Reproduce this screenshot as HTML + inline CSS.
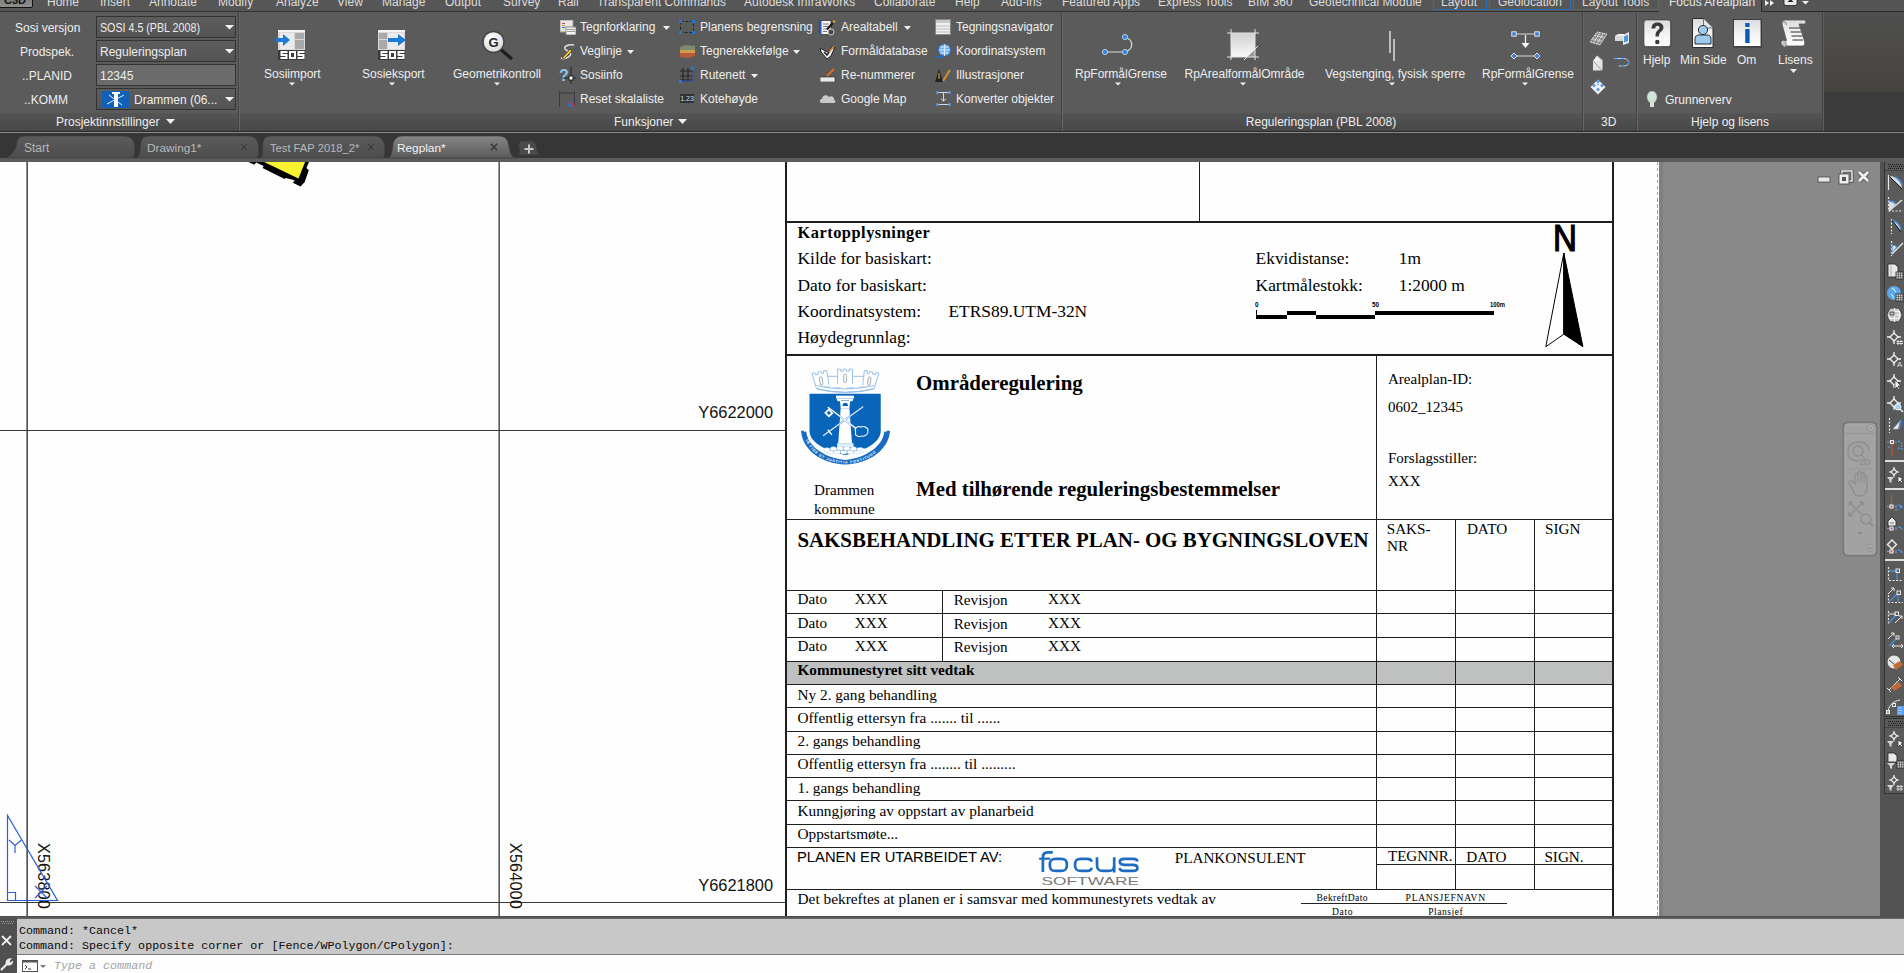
<!DOCTYPE html><html><head><meta charset="utf-8"><style>
html,body{margin:0;padding:0;}
body{width:1904px;height:973px;position:relative;overflow:hidden;background:#5b5b5b;}
.t{position:absolute;white-space:pre;line-height:1;}
.r{position:absolute;}
</style></head><body>
<div class="r" style="left:0px;top:0px;width:1904px;height:11px;background:#565656;"></div>
<div class="r" style="left:0px;top:11px;width:1904px;height:1px;background:#333333;"></div>
<div class="r" style="left:-2px;top:-4px;width:35px;height:12px;background:linear-gradient(#7a7a7a,#8e8e8e);border:1.5px solid #111;border-radius:0 0 2px 0;box-sizing:border-box;"></div>
<div class="t" style="left:4.00px;top:-4.81px;font-size:11px;font-family:'Liberation Sans', sans-serif;color:#111;font-weight:bold;">C3D</div>
<div class="t" style="left:47.00px;top:-4.16px;font-size:12px;font-family:'Liberation Sans', sans-serif;color:#dcdcdc;">Home</div>
<div class="t" style="left:100.00px;top:-4.16px;font-size:12px;font-family:'Liberation Sans', sans-serif;color:#dcdcdc;">Insert</div>
<div class="t" style="left:149.00px;top:-4.16px;font-size:12px;font-family:'Liberation Sans', sans-serif;color:#dcdcdc;">Annotate</div>
<div class="t" style="left:218.00px;top:-4.16px;font-size:12px;font-family:'Liberation Sans', sans-serif;color:#dcdcdc;">Modify</div>
<div class="t" style="left:276.00px;top:-4.16px;font-size:12px;font-family:'Liberation Sans', sans-serif;color:#dcdcdc;">Analyze</div>
<div class="t" style="left:337.00px;top:-4.16px;font-size:12px;font-family:'Liberation Sans', sans-serif;color:#dcdcdc;">View</div>
<div class="t" style="left:382.00px;top:-4.16px;font-size:12px;font-family:'Liberation Sans', sans-serif;color:#dcdcdc;">Manage</div>
<div class="t" style="left:445.00px;top:-4.16px;font-size:12px;font-family:'Liberation Sans', sans-serif;color:#dcdcdc;">Output</div>
<div class="t" style="left:503.00px;top:-4.16px;font-size:12px;font-family:'Liberation Sans', sans-serif;color:#dcdcdc;">Survey</div>
<div class="t" style="left:558.00px;top:-4.16px;font-size:12px;font-family:'Liberation Sans', sans-serif;color:#dcdcdc;">Rail</div>
<div class="t" style="left:597.00px;top:-4.16px;font-size:12px;font-family:'Liberation Sans', sans-serif;color:#dcdcdc;">Transparent Commands</div>
<div class="t" style="left:744.00px;top:-4.16px;font-size:12px;font-family:'Liberation Sans', sans-serif;color:#dcdcdc;">Autodesk InfraWorks</div>
<div class="t" style="left:874.00px;top:-4.16px;font-size:12px;font-family:'Liberation Sans', sans-serif;color:#dcdcdc;">Collaborate</div>
<div class="t" style="left:955.00px;top:-4.16px;font-size:12px;font-family:'Liberation Sans', sans-serif;color:#dcdcdc;">Help</div>
<div class="t" style="left:1001.00px;top:-4.16px;font-size:12px;font-family:'Liberation Sans', sans-serif;color:#dcdcdc;">Add-ins</div>
<div class="t" style="left:1062.00px;top:-4.16px;font-size:12px;font-family:'Liberation Sans', sans-serif;color:#dcdcdc;">Featured Apps</div>
<div class="t" style="left:1158.00px;top:-4.16px;font-size:12px;font-family:'Liberation Sans', sans-serif;color:#dcdcdc;">Express Tools</div>
<div class="t" style="left:1248.00px;top:-4.16px;font-size:12px;font-family:'Liberation Sans', sans-serif;color:#dcdcdc;">BIM 360</div>
<div class="t" style="left:1309.00px;top:-4.16px;font-size:12px;font-family:'Liberation Sans', sans-serif;color:#dcdcdc;">Geotechnical Module</div>
<div class="r" style="left:1433px;top:-2px;width:54px;height:12px;background:transparent;border:1px solid #2d6db5;box-sizing:border-box;"></div>
<div class="t" style="left:1441.00px;top:-4.16px;font-size:12px;font-family:'Liberation Sans', sans-serif;color:#dcdcdc;">Layout</div>
<div class="r" style="left:1489px;top:-2px;width:82px;height:12px;background:transparent;border:1px solid #2d6db5;box-sizing:border-box;"></div>
<div class="t" style="left:1498.00px;top:-4.16px;font-size:12px;font-family:'Liberation Sans', sans-serif;color:#dcdcdc;">Geolocation</div>
<div class="r" style="left:1573px;top:-2px;width:86px;height:12px;background:transparent;border:1px solid #5d6d5a;box-sizing:border-box;"></div>
<div class="t" style="left:1582.00px;top:-4.16px;font-size:12px;font-family:'Liberation Sans', sans-serif;color:#dcdcdc;">Layout Tools</div>
<div class="r" style="left:1659px;top:0px;width:102px;height:12px;background:#5b5b5b;"></div>
<div class="t" style="left:1669.00px;top:-4.16px;font-size:12px;font-family:'Liberation Sans', sans-serif;color:#e6e6e6;">Focus Arealplan</div>
<div class="r" style="left:1761px;top:0px;width:143px;height:11px;background:#555555;"></div>
<div class="r" style="left:1761px;top:0px;width:1px;height:12px;background:#2a2a2a;"></div>
<div class="r" style="left:1761px;top:11px;width:143px;height:1px;background:#2a2a2a;"></div>
<svg class="r" style="left:1765px;top:0px;" width="12" height="7" viewBox="0 0 12 7"><path d="M0 0L4 3L0 6Z M5 0L9 3L5 6Z" fill="#f0f0f0"/></svg>
<svg class="r" style="left:1783px;top:-3px;" width="16" height="9" viewBox="0 0 16 9"><rect x="1" y="0.5" width="13" height="8" rx="2" fill="#e8e8e8" stroke="#222" stroke-width="0.8"/><path d="M4.5 5H10.5L7.5 2Z" fill="#222"/></svg>
<svg class="r" style="left:1802px;top:1px;" width="7" height="4" viewBox="0 0 7 4"><path d="M0 0H7L3.5 3.5Z" fill="#f0f0f0"/></svg>
<div class="r" style="left:0px;top:12px;width:1822px;height:119px;background:#5b5b5b;"></div>
<div class="r" style="left:1822px;top:12px;width:82px;height:80px;background:linear-gradient(#4f4f4f,#46443f);"></div>
<div class="r" style="left:1822px;top:92px;width:82px;height:40px;background:#3b3b3b;"></div>
<div class="r" style="left:0px;top:113px;width:1822px;height:18px;background:linear-gradient(#555555,#474747);"></div>
<div class="r" style="left:1822px;top:12px;width:1px;height:119px;background:#444444;"></div>
<div class="r" style="left:1823px;top:12px;width:1px;height:119px;background:#5e5e5e;"></div>
<div class="r" style="left:0px;top:131px;width:1904px;height:1px;background:#2a2a2a;"></div>
<div class="r" style="left:0px;top:132px;width:1904px;height:1px;background:#8a8a8a;"></div>
<div class="r" style="left:238px;top:12px;width:1px;height:119px;background:#444444;"></div>
<div class="r" style="left:239px;top:12px;width:1px;height:119px;background:#656565;"></div>
<div class="r" style="left:1061px;top:12px;width:1px;height:119px;background:#444444;"></div>
<div class="r" style="left:1062px;top:12px;width:1px;height:119px;background:#656565;"></div>
<div class="r" style="left:1582px;top:12px;width:1px;height:119px;background:#444444;"></div>
<div class="r" style="left:1583px;top:12px;width:1px;height:119px;background:#656565;"></div>
<div class="r" style="left:1636px;top:12px;width:1px;height:119px;background:#444444;"></div>
<div class="r" style="left:1637px;top:12px;width:1px;height:119px;background:#656565;"></div>
<div class="t" style="left:15.00px;top:21.84px;font-size:12px;font-family:'Liberation Sans', sans-serif;color:#eeeeee;">Sosi versjon</div>
<div class="t" style="left:20.00px;top:45.84px;font-size:12px;font-family:'Liberation Sans', sans-serif;color:#eeeeee;">Prodspek.</div>
<div class="t" style="left:22.00px;top:69.84px;font-size:12px;font-family:'Liberation Sans', sans-serif;color:#eeeeee;">..PLANID</div>
<div class="t" style="left:24.00px;top:93.84px;font-size:12px;font-family:'Liberation Sans', sans-serif;color:#eeeeee;">..KOMM</div>
<div class="r" style="left:96px;top:16px;width:140px;height:22px;background:linear-gradient(#5d5d5d,#545454);border:1px solid #333;box-sizing:border-box;"></div>
<div class="t" style="left:100.00px;top:21.84px;font-size:12px;font-family:'Liberation Sans', sans-serif;color:#eeeeee;transform:scaleX(0.89);transform-origin:0 0;">SOSI 4.5 (PBL 2008)</div>
<svg class="r" style="left:225px;top:25px;" width="9" height="5" viewBox="0 0 9 5"><path d="M0 0H9L4.5 4.5Z" fill="#f0f0f0"/></svg>
<div class="r" style="left:96px;top:40px;width:140px;height:22px;background:linear-gradient(#5d5d5d,#545454);border:1px solid #333;box-sizing:border-box;"></div>
<div class="t" style="left:100.00px;top:45.84px;font-size:12px;font-family:'Liberation Sans', sans-serif;color:#eeeeee;">Reguleringsplan</div>
<svg class="r" style="left:225px;top:49px;" width="9" height="5" viewBox="0 0 9 5"><path d="M0 0H9L4.5 4.5Z" fill="#f0f0f0"/></svg>
<div class="r" style="left:96px;top:64px;width:140px;height:22px;background:#6b6b6b;border:1px solid #333;box-sizing:border-box;"></div>
<div class="t" style="left:100.00px;top:69.84px;font-size:12px;font-family:'Liberation Sans', sans-serif;color:#eeeeee;">12345</div>
<div class="r" style="left:96px;top:88px;width:140px;height:22px;background:linear-gradient(#5d5d5d,#545454);border:1px solid #333;box-sizing:border-box;"></div>
<div class="t" style="left:134.00px;top:93.84px;font-size:12px;font-family:'Liberation Sans', sans-serif;color:#eeeeee;">Drammen (06...</div>
<svg class="r" style="left:225px;top:97px;" width="9" height="5" viewBox="0 0 9 5"><path d="M0 0H9L4.5 4.5Z" fill="#f0f0f0"/></svg>
<div class="r" style="left:102px;top:91px;width:27px;height:17px;background:#1060b8;"></div>
<svg class="r" style="left:102px;top:91px;" width="27" height="17" viewBox="0 0 27 17"><rect x="12" y="2" width="4" height="14" fill="#fff"/><rect x="10" y="1" width="8" height="2" fill="#fff"/><path d="M5 13L22 4M7 4L20 14" stroke="#e8f0ff" stroke-width="1"/></svg>
<div class="t" style="left:56.00px;top:115.84px;font-size:12px;font-family:'Liberation Sans', sans-serif;color:#eeeeee;">Prosjektinnstillinger</div>
<svg class="r" style="left:166px;top:119px;" width="9" height="5" viewBox="0 0 9 5"><path d="M0 0H9L4.5 5Z" fill="#f0f0f0"/></svg>
<svg class="r" style="left:276px;top:30px;" width="31" height="31" viewBox="0 0 31 31"><rect x="2" y="0" width="27" height="20" fill="#d9d9d9"/><rect x="2" y="0" width="27" height="2" fill="#f4f4f4"/><rect x="19" y="3" width="9" height="16" fill="#a9a9a9"/><rect x="19" y="9" width="9" height="1" fill="#d9d9d9"/><rect x="4" y="3" width="14" height="16" fill="#ebebeb"/><path d="M0 8H7V4L14 10L7 16V12H0Z" fill="#1f7ad3"/><rect x="2" y="20" width="27" height="10" fill="#3a3a3a"/><path d="M4.5 21H11.5V23H6.5V24H11.5V29H4.5V27H9.5V26H4.5Z" fill="#fff"/><path d="M13 21H20V29H13ZM15 23V27H18V23Z" fill="#fff" fill-rule="evenodd"/><path d="M21.5 21H28.5V23H23.5V24H28.5V29H21.5V27H26.5V26H21.5Z" fill="#fff"/></svg>
<div class="t" style="left:264.00px;top:67.84px;font-size:12px;font-family:'Liberation Sans', sans-serif;color:#eeeeee;">Sosiimport</div>
<svg class="r" style="left:288px;top:82px;" width="8" height="4" viewBox="0 0 8 4"><path d="M1 0.5H7L4 3.5Z" fill="#f0f0f0"/></svg>
<svg class="r" style="left:376px;top:30px;" width="31" height="31" viewBox="0 0 31 31"><rect x="2" y="0" width="27" height="20" fill="#d9d9d9"/><rect x="2" y="0" width="27" height="2" fill="#f4f4f4"/><rect x="3" y="3" width="8" height="16" fill="#a9a9a9"/><rect x="3" y="9" width="8" height="1" fill="#d9d9d9"/><rect x="12" y="3" width="16" height="16" fill="#ebebeb"/><path d="M12 8H22V4L30 10L22 16V12H12Z" fill="#1f7ad3"/><rect x="2" y="20" width="27" height="10" fill="#3a3a3a"/><path d="M4.5 21H11.5V23H6.5V24H11.5V29H4.5V27H9.5V26H4.5Z" fill="#fff"/><path d="M13 21H20V29H13ZM15 23V27H18V23Z" fill="#fff" fill-rule="evenodd"/><path d="M21.5 21H28.5V23H23.5V24H28.5V29H21.5V27H26.5V26H21.5Z" fill="#fff"/></svg>
<div class="t" style="left:362.00px;top:67.84px;font-size:12px;font-family:'Liberation Sans', sans-serif;color:#eeeeee;">Sosieksport</div>
<svg class="r" style="left:388px;top:82px;" width="8" height="4" viewBox="0 0 8 4"><path d="M1 0.5H7L4 3.5Z" fill="#f0f0f0"/></svg>
<svg class="r" style="left:480px;top:29px;" width="34" height="32" viewBox="0 0 34 32"><defs><radialGradient id="mg" cx="0.4" cy="0.35" r="0.7"><stop offset="0" stop-color="#ffffff"/><stop offset="1" stop-color="#d8d8d8"/></radialGradient></defs><line x1="19" y1="19" x2="32" y2="30" stroke="#1e1e1e" stroke-width="3.2"/><circle cx="13.5" cy="13" r="10.5" fill="url(#mg)" stroke="#444" stroke-width="1.4"/><text x="13.5" y="18" font-family="Liberation Sans" font-weight="bold" font-size="13" fill="#262626" text-anchor="middle">G</text></svg>
<div class="t" style="left:453.00px;top:67.84px;font-size:12px;font-family:'Liberation Sans', sans-serif;color:#eeeeee;">Geometrikontroll</div>
<svg class="r" style="left:493px;top:82px;" width="8" height="4" viewBox="0 0 8 4"><path d="M1 0.5H7L4 3.5Z" fill="#f0f0f0"/></svg>
<div class="t" style="left:580.00px;top:21.44px;font-size:12px;font-family:'Liberation Sans', sans-serif;color:#eeeeee;">Tegnforklaring</div>
<svg class="r" style="left:663px;top:26px;" width="7" height="4" viewBox="0 0 7 4"><path d="M0 0H7L3.5 4Z" fill="#f0f0f0"/></svg>
<div class="t" style="left:580.00px;top:45.34px;font-size:12px;font-family:'Liberation Sans', sans-serif;color:#eeeeee;">Veglinje</div>
<svg class="r" style="left:627px;top:50px;" width="7" height="4" viewBox="0 0 7 4"><path d="M0 0H7L3.5 4Z" fill="#f0f0f0"/></svg>
<div class="t" style="left:580.00px;top:69.34px;font-size:12px;font-family:'Liberation Sans', sans-serif;color:#eeeeee;">Sosiinfo</div>
<div class="t" style="left:580.00px;top:93.24px;font-size:12px;font-family:'Liberation Sans', sans-serif;color:#eeeeee;">Reset skalaliste</div>
<div class="t" style="left:700.00px;top:21.44px;font-size:12px;font-family:'Liberation Sans', sans-serif;color:#eeeeee;">Planens begrensning</div>
<div class="t" style="left:700.00px;top:45.34px;font-size:12px;font-family:'Liberation Sans', sans-serif;color:#eeeeee;">Tegnerekkefølge</div>
<svg class="r" style="left:793px;top:50px;" width="7" height="4" viewBox="0 0 7 4"><path d="M0 0H7L3.5 4Z" fill="#f0f0f0"/></svg>
<div class="t" style="left:700.00px;top:69.34px;font-size:12px;font-family:'Liberation Sans', sans-serif;color:#eeeeee;">Rutenett</div>
<svg class="r" style="left:751px;top:74px;" width="7" height="4" viewBox="0 0 7 4"><path d="M0 0H7L3.5 4Z" fill="#f0f0f0"/></svg>
<div class="t" style="left:700.00px;top:93.24px;font-size:12px;font-family:'Liberation Sans', sans-serif;color:#eeeeee;">Kotehøyde</div>
<div class="t" style="left:841.00px;top:21.44px;font-size:12px;font-family:'Liberation Sans', sans-serif;color:#eeeeee;">Arealtabell</div>
<svg class="r" style="left:904px;top:26px;" width="7" height="4" viewBox="0 0 7 4"><path d="M0 0H7L3.5 4Z" fill="#f0f0f0"/></svg>
<div class="t" style="left:841.00px;top:45.34px;font-size:12px;font-family:'Liberation Sans', sans-serif;color:#eeeeee;">Formåldatabase</div>
<div class="t" style="left:841.00px;top:69.34px;font-size:12px;font-family:'Liberation Sans', sans-serif;color:#eeeeee;">Re-nummerer</div>
<div class="t" style="left:841.00px;top:93.24px;font-size:12px;font-family:'Liberation Sans', sans-serif;color:#eeeeee;">Google Map</div>
<div class="t" style="left:956.00px;top:21.44px;font-size:12px;font-family:'Liberation Sans', sans-serif;color:#eeeeee;">Tegningsnavigator</div>
<div class="t" style="left:956.00px;top:45.34px;font-size:12px;font-family:'Liberation Sans', sans-serif;color:#eeeeee;">Koordinatsystem</div>
<div class="t" style="left:956.00px;top:69.34px;font-size:12px;font-family:'Liberation Sans', sans-serif;color:#eeeeee;">Illustrasjoner</div>
<div class="t" style="left:956.00px;top:93.24px;font-size:12px;font-family:'Liberation Sans', sans-serif;color:#eeeeee;">Konverter objekter</div>
<svg class="r" style="left:560px;top:20px;" width="16" height="15" viewBox="0 0 16 15"><rect x="0" y="0" width="13" height="12" fill="#e8e8e8" stroke="#999" stroke-width="1"/><rect x="2" y="3" width="3" height="1" fill="#c44"/><rect x="2" y="5" width="3" height="1" fill="#d90"/><rect x="2" y="7" width="3" height="1" fill="#36c"/><rect x="6" y="7" width="10" height="8" fill="#f4f4f4" stroke="#888" stroke-width="1"/><rect x="7" y="9" width="8" height="1" fill="#999"/><rect x="7" y="11" width="8" height="1" fill="#999"/></svg>
<svg class="r" style="left:560px;top:44px;" width="16" height="16" viewBox="0 0 16 16"><path d="M14 1C8 0 2 3 6 6C10 8 14 11 6 14C3 15 1 14 1 14" fill="none" stroke="#e0e0e0" stroke-width="1.5"/><path d="M2 14L10 5L12 7L4 15Z" fill="#f0c030" stroke="#333" stroke-width="0.7"/></svg>
<svg class="r" style="left:559px;top:67px;" width="17" height="18" viewBox="0 0 17 18"><text x="0" y="14" font-family="Liberation Sans" font-weight="bold" font-size="16" fill="#8ec4ec">?</text><path d="M12 0V17M5 11H17" stroke="#222" stroke-width="1"/><rect x="10" y="9" width="4" height="4" fill="#fff" stroke="#222"/></svg>
<svg class="r" style="left:559px;top:91px;" width="16" height="16" viewBox="0 0 16 16"><path d="M0.5 0V16M15.5 0V14M0 2H16" stroke="#3a3a3a" stroke-width="1"/><circle cx="12" cy="13" r="3" fill="#2a6fd0"/><path d="M11 11L15 15" stroke="#d03020" stroke-width="2"/></svg>
<svg class="r" style="left:679px;top:20px;" width="16" height="14" viewBox="0 0 16 14"><rect x="1.5" y="1.5" width="13" height="11" fill="none" stroke="#222" stroke-dasharray="3 2"/><rect x="0" y="0" width="3" height="3" fill="#1b7ce0"/><rect x="13" y="0" width="3" height="3" fill="#1b7ce0"/><rect x="0" y="11" width="3" height="3" fill="#1b7ce0"/><rect x="13" y="11" width="3" height="3" fill="#1b7ce0"/></svg>
<svg class="r" style="left:679px;top:44px;" width="17" height="15" viewBox="0 0 17 15"><path d="M1 3L6 1L16 2L16 6L1 6Z" fill="#7e8a70"/><path d="M1 6H16V9H1Z" fill="#d49a50"/><path d="M1 9H16V12L10 14L1 13Z" fill="#b85a3c"/></svg>
<svg class="r" style="left:679px;top:67px;" width="16" height="16" viewBox="0 0 16 16"><path d="M4 1V15M9 1V15M1 4H14M1 9H14M1 13H14" stroke="#262626" stroke-width="1.2"/><path d="M14 1V14H1" stroke="#3050b0" stroke-width="1" fill="none"/><rect x="12" y="0" width="3" height="3" fill="#1b7ce0"/><rect x="0" y="13" width="3" height="3" fill="#1b7ce0"/></svg>
<svg class="r" style="left:680px;top:94px;" width="14" height="9" viewBox="0 0 14 9"><rect x="0" y="0" width="14" height="9" fill="#333"/><text x="7" y="7" font-family="Liberation Sans" font-size="7" fill="#ddd" text-anchor="middle">1.23</text></svg>
<svg class="r" style="left:819px;top:19px;" width="17" height="17" viewBox="0 0 17 17"><rect x="1" y="1.5" width="11" height="14" fill="#f6f6f6" stroke="#2a2a2a" stroke-width="0.7"/><rect x="1" y="1.5" width="1.6" height="14" fill="#2a5fc8"/><path d="M4 5H10M4 7.5H10M4 10H9M4 12.5H8" stroke="#555" stroke-width="0.8"/><path d="M16 1.5L8 10.5" stroke="#1a1a1a" stroke-width="2.2"/><path d="M16 1.5L14 3.7" stroke="#d8a040" stroke-width="2.2"/><circle cx="12" cy="13" r="3" fill="#4a4a4a" stroke="#c8c8c8" stroke-width="1"/></svg>
<svg class="r" style="left:819px;top:44px;" width="17" height="16" viewBox="0 0 17 16"><path d="M1 4L8 8L16 3L12 12L8 15L2 8Z" fill="#eee" stroke="#222" stroke-width="1"/><path d="M5 8L8 11L14 2" stroke="#222" stroke-width="1.5" fill="none"/><path d="M10 8L15 2" stroke="#e09030" stroke-width="1.5"/></svg>
<svg class="r" style="left:820px;top:68px;" width="16" height="14" viewBox="0 0 16 14"><rect x="0" y="9" width="15" height="5" fill="#e8e8e8" stroke="#222" stroke-width="0.6"/><path d="M7 8L14 1" stroke="#e07020" stroke-width="2"/></svg>
<svg class="r" style="left:819px;top:92px;" width="17" height="12" viewBox="0 0 17 12"><path d="M3 11C0 11 0 7 3 7C3 3 8 2 10 5C12 3 16 5 15 8C17 8 17 11 15 11Z" fill="#c9c9c9"/></svg>
<svg class="r" style="left:935px;top:19px;" width="16" height="16" viewBox="0 0 16 16"><rect x="0.5" y="0.5" width="15" height="15" fill="#f2f2f2" stroke="#888"/><rect x="1" y="1" width="14" height="3" fill="#c8c8c8"/><path d="M1 7H15M1 10H15M1 13H15" stroke="#bbb"/></svg>
<svg class="r" style="left:935px;top:43px;" width="16" height="16" viewBox="0 0 16 16"><circle cx="9.5" cy="7" r="6" fill="#7ab3e8" stroke="#2a70c0"/><path d="M4 7H15M9.5 1V13M5 4H14M5 10H14" stroke="#e8f2ff" stroke-width="0.8"/><path d="M0 14H8L6 12" stroke="#1b6fd0" stroke-width="1.5" fill="none"/></svg>
<svg class="r" style="left:935px;top:67px;" width="16" height="17" viewBox="0 0 16 17"><path d="M4 2L8 15H0Z" fill="#222"/><path d="M4 6V12" stroke="#dcc03a" stroke-width="1"/><path d="M8 14L15 3" stroke="#d69030" stroke-width="2"/></svg>
<svg class="r" style="left:936px;top:91px;" width="15" height="15" viewBox="0 0 15 15"><path d="M1.5 1.5H13.5M1.5 13.5H13.5M7.5 2V10M5 8L7.5 10L10 8" stroke="#d8d8d8" stroke-width="1" fill="none"/><circle cx="1.5" cy="1.5" r="1.5" fill="#5b9be0"/><circle cx="13.5" cy="1.5" r="1.5" fill="#5b9be0"/><circle cx="1.5" cy="13.5" r="1.5" fill="#5b9be0"/><circle cx="13.5" cy="13.5" r="1.5" fill="#5b9be0"/></svg>
<div class="t" style="left:614.00px;top:115.84px;font-size:12px;font-family:'Liberation Sans', sans-serif;color:#eeeeee;">Funksjoner</div>
<svg class="r" style="left:678px;top:119px;" width="9" height="5" viewBox="0 0 9 5"><path d="M0 0H9L4.5 5Z" fill="#f0f0f0"/></svg>
<svg class="r" style="left:1100px;top:32px;" width="36" height="24" viewBox="0 0 36 24"><path d="M5 20H25M25 5C34 8 34 17 25 20" fill="none" stroke="#dcdcdc" stroke-width="1.2"/><circle cx="5" cy="20" r="2.6" fill="#2f86de" stroke="#d0e0f0" stroke-width="0.8"/><circle cx="25" cy="20" r="2.6" fill="#2f86de" stroke="#d0e0f0" stroke-width="0.8"/><circle cx="25" cy="5" r="2.6" fill="#2f86de" stroke="#d0e0f0" stroke-width="0.8"/></svg>
<div class="t" style="left:1075.00px;top:67.54px;font-size:12px;font-family:'Liberation Sans', sans-serif;color:#eeeeee;">RpFormålGrense</div>
<svg class="r" style="left:1114px;top:82px;" width="8" height="4" viewBox="0 0 8 4"><path d="M1 0.5H7L4 3.5Z" fill="#f0f0f0"/></svg>
<svg class="r" style="left:1227px;top:29px;" width="32" height="31" viewBox="0 0 32 31"><defs><linearGradient id="g1" x1="0" y1="0" x2="0" y2="1"><stop offset="0" stop-color="#cfd0d2"/><stop offset="1" stop-color="#f8f8f8"/></linearGradient></defs><rect x="4" y="4" width="24" height="24" fill="url(#g1)"/><path d="M28 20L20 28H28Z" fill="#9b9b9b"/><path d="M4 0V31M28 0V31M0 4H32M0 28H32" stroke="#e6e6e6" stroke-width="1"/><path d="M17 31L31 17" stroke="#e6e6e6" stroke-width="1"/></svg>
<div class="t" style="left:1184.50px;top:67.54px;font-size:12px;font-family:'Liberation Sans', sans-serif;color:#eeeeee;">RpArealformålOmråde</div>
<svg class="r" style="left:1239px;top:82px;" width="8" height="4" viewBox="0 0 8 4"><path d="M1 0.5H7L4 3.5Z" fill="#f0f0f0"/></svg>
<svg class="r" style="left:1387px;top:31px;" width="10" height="30" viewBox="0 0 10 30"><path d="M3 0V22M7 8V30" stroke="#e6e6e6" stroke-width="1.4"/></svg>
<div class="t" style="left:1325.00px;top:67.54px;font-size:12px;font-family:'Liberation Sans', sans-serif;color:#eeeeee;">Vegstenging, fysisk sperre</div>
<svg class="r" style="left:1388px;top:82px;" width="8" height="4" viewBox="0 0 8 4"><path d="M1 0.5H7L4 3.5Z" fill="#f0f0f0"/></svg>
<svg class="r" style="left:1508px;top:30px;" width="34" height="30" viewBox="0 0 34 30"><path d="M6 4H29M6 26H29" stroke="#d8d8d8" stroke-width="1"/><path d="M17.5 5V14" stroke="#f0f0f0" stroke-width="1.3"/><path d="M13.5 13H21.5L17.5 18Z" fill="#f4f4f4"/><rect x="3.8" y="1.8" width="4.4" height="4.4" fill="#3a7fd0" stroke="#f0f0f0" stroke-width="0.9"/><rect x="26.8" y="1.8" width="4.4" height="4.4" fill="#3a7fd0" stroke="#f0f0f0" stroke-width="0.9"/><path d="M6 23L9 26L6 29L3 26Z" fill="#3a7fd0" stroke="#f0f0f0" stroke-width="0.9"/><path d="M29 23L32 26L29 29L26 26Z" fill="#3a7fd0" stroke="#f0f0f0" stroke-width="0.9"/></svg>
<div class="t" style="left:1482.00px;top:67.54px;font-size:12px;font-family:'Liberation Sans', sans-serif;color:#eeeeee;">RpFormålGrense</div>
<svg class="r" style="left:1521px;top:82px;" width="8" height="4" viewBox="0 0 8 4"><path d="M1 0.5H7L4 3.5Z" fill="#f0f0f0"/></svg>
<div class="t" style="left:1321.00px;top:115.84px;font-size:12px;font-family:'Liberation Sans', sans-serif;color:#eeeeee;transform:translateX(-50%);">Reguleringsplan (PBL 2008)</div>
<svg class="r" style="left:1589px;top:31px;" width="19" height="15" viewBox="0 0 19 15"><path d="M1 11L8 1L18 3L11 14Z" fill="#bdbdbd" opacity="0.5"/><g stroke="#f4f4f4" stroke-width="0.9" stroke-dasharray="1.6 0.8" fill="none"><path d="M1 11L8 1L18 3L11 14Z"/><path d="M3.3 7.7L13.3 10.3M5.7 4.3L15.7 6.7M4.3 12L11 2M7.7 13L14.5 2.5"/></g></svg>
<svg class="r" style="left:1613px;top:31px;" width="18" height="15" viewBox="0 0 18 15"><path d="M2 5L5 3H11V9H2Z" fill="#f0f0f0"/><path d="M2 5H10V10H2Z" fill="#d8d8d8"/><path d="M10 4L16 1V12L10 14Z" fill="#e8e8e8"/><path d="M11 5.5L15 3.5V10L11 11.5Z" fill="#4a96e6"/></svg>
<svg class="r" style="left:1592px;top:55px;" width="12" height="17" viewBox="0 0 12 17"><path d="M5 0.5L10 6H1Z" fill="#f2f2f2"/><path d="M5 0.5L11 5V6H10Z" fill="#b8c4d0"/><rect x="1" y="6" width="9" height="9.5" fill="#e4e4e4"/><path d="M10 6L11 5V14.5L10 15.5Z" fill="#9aa0a6"/><path d="M1.5 6.5L9.5 15" stroke="#888" stroke-width="0.8"/></svg>
<svg class="r" style="left:1613px;top:55px;" width="18" height="14" viewBox="0 0 18 14"><path d="M1 3.5H11C14 3.5 16 6 16 7.5M5.5 11H11C14 11 16 9 16 7.5" stroke="#cfcfcf" stroke-width="1" fill="none"/><path d="M3 2V5M9.5 2V5M9.5 9.5V12.5M13.5 7.5H17" stroke="#1f7ad8" stroke-width="1.4"/></svg>
<svg class="r" style="left:1590px;top:79px;" width="16" height="16" viewBox="0 0 16 16"><path d="M8 0.5L15.5 8L8 15.5L0.5 8Z" fill="#f4f4f4"/><g fill="#3b8de0" opacity="0.85"><path d="M8 0.5L10 2.5L8 4.5L6 2.5Z"/><path d="M4 4.5L6 6.5L4 8.5L2 6.5Z"/><path d="M12 4.5L14 6.5L12 8.5L10 6.5Z"/><path d="M8 8.5L10 10.5L8 12.5L6 10.5Z"/><path d="M8 4.5L9 5.5L8 6.5L7 5.5Z"/></g></svg>
<div class="t" style="left:1601.00px;top:115.84px;font-size:12px;font-family:'Liberation Sans', sans-serif;color:#eeeeee;">3D</div>
<svg class="r" style="left:1642px;top:18px;" width="32" height="32" viewBox="0 0 32 32"><defs><linearGradient id="hg" x1="0" y1="0" x2="0" y2="1"><stop offset="0" stop-color="#d9dbde"/><stop offset="0.5" stop-color="#f2f2f2"/><stop offset="1" stop-color="#ffffff"/></linearGradient></defs><rect x="2.5" y="2.5" width="27" height="27" rx="2.5" fill="#222" opacity="0.35"/><rect x="2" y="2" width="26.5" height="26.5" rx="2.5" fill="url(#hg)" stroke="#3a3a3a" stroke-width="0.6"/><path d="M9.5 10.5C9.5 6 12.5 4.5 15.5 4.5C19 4.5 21.5 6.5 21.5 9.5C21.5 13 17 14 17 17.5V18.5H13.5V17C13.5 12.5 17.5 12 17.5 9.8C17.5 8.5 16.7 7.8 15.5 7.8C14 7.8 13.3 8.8 13.3 10.5Z" fill="#3a3a3a"/><circle cx="15.3" cy="24" r="2.2" fill="#3a3a3a"/></svg>
<div class="t" style="left:1643.00px;top:54.34px;font-size:12px;font-family:'Liberation Sans', sans-serif;color:#eeeeee;">Hjelp</div>
<svg class="r" style="left:1691px;top:17px;" width="25" height="33" viewBox="0 0 25 33"><defs><linearGradient id="hg" x1="0" y1="0" x2="0" y2="1"><stop offset="0" stop-color="#d9dbde"/><stop offset="0.5" stop-color="#f2f2f2"/><stop offset="1" stop-color="#ffffff"/></linearGradient></defs><path d="M1.5 1.5H12.5L22 11V30.5H1.5Z" fill="url(#hg)" stroke="#2a2a2a" stroke-width="1"/><path d="M12.5 1.5V11H22" fill="#e6e6e6" stroke="#2a2a2a" stroke-width="0.6"/><path d="M4 27V21.5C4 19 6 18 8 18H16C18 18 20 19 20 21.5V27Z" fill="#9ccbef" stroke="#2a2a2a" stroke-width="1"/><circle cx="12" cy="13" r="4.6" fill="#9ccbef" stroke="#2a2a2a" stroke-width="1"/></svg>
<div class="t" style="left:1680.00px;top:54.34px;font-size:12px;font-family:'Liberation Sans', sans-serif;color:#eeeeee;">Min Side</div>
<svg class="r" style="left:1732px;top:18px;" width="31" height="31" viewBox="0 0 31 31"><defs><linearGradient id="hg" x1="0" y1="0" x2="0" y2="1"><stop offset="0" stop-color="#d9dbde"/><stop offset="0.5" stop-color="#f2f2f2"/><stop offset="1" stop-color="#ffffff"/></linearGradient></defs><rect x="2.5" y="2.5" width="27.5" height="27.5" fill="#222" opacity="0.35"/><rect x="1.5" y="1.5" width="27.5" height="27" fill="url(#hg)" stroke="#2a2a2a" stroke-width="0.8"/><rect x="13.2" y="5" width="4.4" height="4" fill="#0a5cb8"/><rect x="13.2" y="11" width="4.4" height="14" fill="#0a5cb8"/></svg>
<div class="t" style="left:1737.00px;top:54.34px;font-size:12px;font-family:'Liberation Sans', sans-serif;color:#eeeeee;">Om</div>
<svg class="r" style="left:1780px;top:18px;" width="28" height="31" viewBox="0 0 28 31"><defs><linearGradient id="hg" x1="0" y1="0" x2="0" y2="1"><stop offset="0" stop-color="#d9dbde"/><stop offset="0.5" stop-color="#f2f2f2"/><stop offset="1" stop-color="#ffffff"/></linearGradient></defs><path d="M5 2H24C26.5 2 26.5 6 24 6H19L24.5 23C25.5 26 24 28 22 28H6L2 27C0.5 26 1 23 3 22.5H6.5L2.5 8C1.5 4 2.5 2 5 2Z" fill="url(#hg)" stroke="#555" stroke-width="0.8"/><path d="M2.5 22.5C5 22 7 24 6 28C5 30 3 29 2.5 27" fill="#bfc3c8" stroke="#555" stroke-width="0.6"/><path d="M3 4C5 3 6.5 5 6.5 7" fill="#bfc3c8" stroke="#555" stroke-width="0.6"/><path d="M9 10H20M10.5 14H21M11.5 18H22.5M12.5 22H23" stroke="#333" stroke-width="1"/></svg>
<div class="t" style="left:1778.00px;top:54.34px;font-size:12px;font-family:'Liberation Sans', sans-serif;color:#eeeeee;">Lisens</div>
<svg class="r" style="left:1790px;top:69px;" width="7" height="4" viewBox="0 0 7 4"><path d="M0 0H7L3.5 4Z" fill="#f0f0f0"/></svg>
<svg class="r" style="left:1646px;top:91px;" width="12" height="17" viewBox="0 0 12 17"><ellipse cx="6" cy="6" rx="5" ry="6" fill="#cfe3d7" stroke="#999" stroke-width="0.6"/><rect x="4" y="11" width="4" height="5" fill="#ddd"/></svg>
<div class="t" style="left:1665.00px;top:94.34px;font-size:12px;font-family:'Liberation Sans', sans-serif;color:#eeeeee;">Grunnerverv</div>
<div class="t" style="left:1730.00px;top:115.84px;font-size:12px;font-family:'Liberation Sans', sans-serif;color:#eeeeee;transform:translateX(-50%);">Hjelp og lisens</div>
<div class="r" style="left:0px;top:133px;width:1904px;height:25px;background:#363636;"></div>
<div class="r" style="left:0px;top:158px;width:1904px;height:4px;background:#5c5c5c;"></div>
<svg class="r" style="left:0px;top:130px;" width="560" height="32" viewBox="0 0 560 32"><defs><linearGradient id="ta" x1="0" y1="0" x2="0" y2="1"><stop offset="0" stop-color="#868686"/><stop offset="1" stop-color="#5a5a5a"/></linearGradient><linearGradient id="ti" x1="0" y1="0" x2="0" y2="1"><stop offset="0" stop-color="#5b5b5b"/><stop offset="1" stop-color="#4d4d4d"/></linearGradient></defs><g transform="translate(0,-130)"><path d="M4 158 C9 158 16 151 17 142 Q18 136 25 136 H124 Q132 136 134 143 C136 152 134 158 132 158 Z" fill="url(#ti)" stroke="#3a3a3a" stroke-width="0.6"/></g></svg>
<svg class="r" style="left:0px;top:130px;" width="560" height="32" viewBox="0 0 560 32"><defs><linearGradient id="ta" x1="0" y1="0" x2="0" y2="1"><stop offset="0" stop-color="#868686"/><stop offset="1" stop-color="#5a5a5a"/></linearGradient><linearGradient id="ti" x1="0" y1="0" x2="0" y2="1"><stop offset="0" stop-color="#5b5b5b"/><stop offset="1" stop-color="#4d4d4d"/></linearGradient></defs><g transform="translate(0,-130)"><path d="M135 158 C140 158 140 151 141 142 Q142 136 149 136 H248 Q256 136 258 143 C260 152 258 158 256 158 Z" fill="url(#ti)" stroke="#3a3a3a" stroke-width="0.6"/></g></svg>
<svg class="r" style="left:0px;top:130px;" width="560" height="32" viewBox="0 0 560 32"><defs><linearGradient id="ta" x1="0" y1="0" x2="0" y2="1"><stop offset="0" stop-color="#868686"/><stop offset="1" stop-color="#5a5a5a"/></linearGradient><linearGradient id="ti" x1="0" y1="0" x2="0" y2="1"><stop offset="0" stop-color="#5b5b5b"/><stop offset="1" stop-color="#4d4d4d"/></linearGradient></defs><g transform="translate(0,-130)"><path d="M259 158 C264 158 262 151 263 142 Q264 136 271 136 H374 Q382 136 384 143 C386 152 384 158 383 158 Z" fill="url(#ti)" stroke="#3a3a3a" stroke-width="0.6"/></g></svg>
<svg class="r" style="left:0px;top:130px;" width="560" height="32" viewBox="0 0 560 32"><defs><linearGradient id="ta" x1="0" y1="0" x2="0" y2="1"><stop offset="0" stop-color="#868686"/><stop offset="1" stop-color="#5a5a5a"/></linearGradient><linearGradient id="ti" x1="0" y1="0" x2="0" y2="1"><stop offset="0" stop-color="#5b5b5b"/><stop offset="1" stop-color="#4d4d4d"/></linearGradient></defs><g transform="translate(0,-130)"><path d="M387 158 C391 158 392 154 393 144 Q395 136 402 136 H499 Q506 136 508 142 L510 151 C511 156 514 158 518 158 Z" fill="url(#ta)" stroke="#3a3a3a" stroke-width="0.6"/></g></svg>
<svg class="r" style="left:510px;top:136px;" width="40" height="22" viewBox="0 0 40 22"><path d="M7 19C10 19 10 14 9 10Q8 5 13 5H21Q25 5 26 9L27 14C28 17 29 19 32 19Z" fill="#4b4b4b" stroke="#3a3a3a" stroke-width="0.6"/></svg>
<div class="t" style="left:24.00px;top:142.34px;font-size:12px;font-family:'Liberation Sans', sans-serif;color:#b8b8b8;">Start</div>
<div class="t" style="left:147.00px;top:142.51px;font-size:11.8px;font-family:'Liberation Sans', sans-serif;color:#b8b8b8;">Drawing1*</div>
<div class="t" style="left:270.00px;top:143.02px;font-size:11.2px;font-family:'Liberation Sans', sans-serif;color:#b8b8b8;">Test FAP 2018_2*</div>
<div class="t" style="left:397.00px;top:142.51px;font-size:11.8px;font-family:'Liberation Sans', sans-serif;color:#f4f4f4;">Regplan*</div>
<svg class="r" style="left:240px;top:143px;" width="8" height="8" viewBox="0 0 8 8"><path d="M0.8 0.8L7.2 7.2M7.2 0.8L0.8 7.2" stroke="#777" stroke-width="2.4" opacity="0.6"/><path d="M0.8 0.8L7.2 7.2M7.2 0.8L0.8 7.2" stroke="#353535" stroke-width="1.4"/></svg>
<svg class="r" style="left:367px;top:143px;" width="8" height="8" viewBox="0 0 8 8"><path d="M0.8 0.8L7.2 7.2M7.2 0.8L0.8 7.2" stroke="#777" stroke-width="2.4" opacity="0.6"/><path d="M0.8 0.8L7.2 7.2M7.2 0.8L0.8 7.2" stroke="#353535" stroke-width="1.4"/></svg>
<svg class="r" style="left:490px;top:143px;" width="8" height="8" viewBox="0 0 8 8"><path d="M0.8 0.8L7.2 7.2M7.2 0.8L0.8 7.2" stroke="#777" stroke-width="2.4" opacity="0.6"/><path d="M0.8 0.8L7.2 7.2M7.2 0.8L0.8 7.2" stroke="#353535" stroke-width="1.4"/></svg>
<svg class="r" style="left:523px;top:143px;" width="12" height="12" viewBox="0 0 12 12"><path d="M6 1.5V10.5M1.5 6H10.5" stroke="#c8c8c8" stroke-width="2"/></svg>
<div class="r" style="left:0px;top:162px;width:1659px;height:754px;background:#fefefe;"></div>
<div class="r" style="left:1659px;top:162px;width:221px;height:754px;background:#898989;"></div>
<div class="r" style="left:1659px;top:162px;width:4px;height:754px;background:#808080;"></div>
<div class="r" style="left:1657px;top:162px;width:1px;height:754px;background:repeating-linear-gradient(#a0a0a0 0 3.5px,transparent 3.5px 6px);"></div>
<div class="r" style="left:26px;top:162px;width:1px;height:754px;background:#8a8a8a;"></div>
<div class="r" style="left:27px;top:162px;width:1px;height:754px;background:#555555;"></div>
<div class="r" style="left:498px;top:162px;width:1px;height:754px;background:#9a9a9a;"></div>
<div class="r" style="left:499px;top:162px;width:1px;height:754px;background:#5a5a5a;"></div>
<div class="r" style="left:0px;top:430px;width:786px;height:1px;background:#3c3c3c;"></div>
<div class="r" style="left:0px;top:902px;width:786px;height:1px;background:#3c3c3c;"></div>
<div class="t" style="left:773.00px;top:404.12px;font-size:16.4px;font-family:'Liberation Sans', sans-serif;color:#111;transform:translateX(-100%);">Y6622000</div>
<div class="t" style="left:773.00px;top:877.12px;font-size:16.4px;font-family:'Liberation Sans', sans-serif;color:#111;transform:translateX(-100%);">Y6621800</div>
<div class="t" style="left:38px;top:843px;font-size:16.2px;letter-spacing:0.15px;font-family:Liberation Sans,sans-serif;color:#111;transform-origin:0 0;transform:translate(14px,0) rotate(90deg);">X563800</div>
<div class="t" style="left:510px;top:843px;font-size:16.2px;letter-spacing:0.15px;font-family:Liberation Sans,sans-serif;color:#111;transform-origin:0 0;transform:translate(14px,0) rotate(90deg);">X564000</div>
<svg class="r" style="left:240px;top:162px;" width="80" height="30" viewBox="0 0 80 30"><path d="M7.9 0H68.8V0.4L66.4 6.1L68.8 8.2L64.6 20.3L60.4 24.5L53 20.8L54.6 18.2L45.7 16.1L44.6 16.9L22.6 6.1L23.6 4L16.3 0.4L14.2 2.7L8.4 0.1Z" fill="#000"/><path d="M24.1 0H65.1L58.5 16.6Z" fill="#f8f230"/></svg>
<svg class="r" style="left:5px;top:813px;" width="56" height="92" viewBox="0 0 56 92"><path d="M2.5 2.5V87.5H52.5Z" fill="none" stroke="#2a5fd6" stroke-width="1.2"/><path d="M2.5 79.5H10.5V87.5" fill="none" stroke="#2a5fd6" stroke-width="1.2"/><path d="M4 27L10 32.5L16.5 27M10 32.5V40" fill="none" stroke="#2a5fd6" stroke-width="1.2"/><path d="M30 73L42 85M42 73L30 85" stroke="#2a5fd6" stroke-width="1.2"/></svg>
<div class="r" style="left:785px;top:162px;width:2px;height:754px;background:#1e1e1e;"></div>
<div class="r" style="left:1612px;top:162px;width:2px;height:754px;background:#1e1e1e;"></div>
<div class="r" style="left:786px;top:221px;width:828px;height:2px;background:#1e1e1e;"></div>
<div class="r" style="left:1199px;top:162px;width:1px;height:60px;background:#1e1e1e;"></div>
<div class="r" style="left:786px;top:354px;width:826px;height:2px;background:#1e1e1e;"></div>
<div class="r" style="left:1376px;top:354px;width:1px;height:536px;background:#1e1e1e;"></div>
<div class="r" style="left:786px;top:519px;width:826px;height:1px;background:#1e1e1e;"></div>
<div class="r" style="left:1455px;top:519px;width:1px;height:371px;background:#1e1e1e;"></div>
<div class="r" style="left:1534px;top:519px;width:1px;height:371px;background:#1e1e1e;"></div>
<div class="r" style="left:786px;top:590px;width:826px;height:1px;background:#1e1e1e;"></div>
<div class="r" style="left:786px;top:613px;width:826px;height:1px;background:#1e1e1e;"></div>
<div class="r" style="left:786px;top:637px;width:826px;height:1px;background:#1e1e1e;"></div>
<div class="r" style="left:786px;top:661px;width:826px;height:1px;background:#1e1e1e;"></div>
<div class="r" style="left:786px;top:684px;width:826px;height:1px;background:#1e1e1e;"></div>
<div class="r" style="left:786px;top:707px;width:826px;height:1px;background:#1e1e1e;"></div>
<div class="r" style="left:786px;top:731px;width:826px;height:1px;background:#1e1e1e;"></div>
<div class="r" style="left:786px;top:754px;width:826px;height:1px;background:#1e1e1e;"></div>
<div class="r" style="left:786px;top:777px;width:826px;height:1px;background:#1e1e1e;"></div>
<div class="r" style="left:786px;top:800px;width:826px;height:1px;background:#1e1e1e;"></div>
<div class="r" style="left:786px;top:824px;width:826px;height:1px;background:#1e1e1e;"></div>
<div class="r" style="left:786px;top:847px;width:826px;height:1px;background:#1e1e1e;"></div>
<div class="r" style="left:942px;top:590px;width:1px;height:71px;background:#1e1e1e;"></div>
<div class="r" style="left:787px;top:662px;width:825px;height:22px;background:#bfc1c0;"></div>
<div class="r" style="left:1376px;top:661px;width:1px;height:23px;background:#1e1e1e;"></div>
<div class="r" style="left:1455px;top:661px;width:1px;height:23px;background:#1e1e1e;"></div>
<div class="r" style="left:1534px;top:661px;width:1px;height:23px;background:#1e1e1e;"></div>
<div class="r" style="left:1376px;top:864px;width:236px;height:1px;background:#1e1e1e;"></div>
<div class="r" style="left:786px;top:889px;width:826px;height:1px;background:#1e1e1e;"></div>
<div class="t" style="left:797.50px;top:224.97px;font-size:16.4px;font-family:'Liberation Serif', serif;color:#000;font-weight:bold;letter-spacing:0.5px;">Kartopplysninger</div>
<div class="t" style="left:797.50px;top:249.93px;font-size:17.4px;font-family:'Liberation Serif', serif;color:#000;">Kilde for basiskart:</div>
<div class="t" style="left:797.50px;top:276.63px;font-size:17.4px;font-family:'Liberation Serif', serif;color:#000;">Dato for basiskart:</div>
<div class="t" style="left:797.50px;top:302.73px;font-size:17.4px;font-family:'Liberation Serif', serif;color:#000;">Koordinatsystem:</div>
<div class="t" style="left:948.50px;top:302.73px;font-size:17.4px;font-family:'Liberation Serif', serif;color:#000;">ETRS89.UTM-32N</div>
<div class="t" style="left:797.50px;top:329.43px;font-size:17.4px;font-family:'Liberation Serif', serif;color:#000;">Høydegrunnlag:</div>
<div class="t" style="left:1255.60px;top:249.73px;font-size:17.4px;font-family:'Liberation Serif', serif;color:#000;">Ekvidistanse:</div>
<div class="t" style="left:1398.70px;top:249.73px;font-size:17.4px;font-family:'Liberation Serif', serif;color:#000;">1m</div>
<div class="t" style="left:1255.60px;top:276.63px;font-size:17.4px;font-family:'Liberation Serif', serif;color:#000;">Kartmålestokk:</div>
<div class="t" style="left:1398.70px;top:276.63px;font-size:17.4px;font-family:'Liberation Serif', serif;color:#000;">1:2000 m</div>
<div class="t" style="left:1254.50px;top:300.85px;font-size:7.5px;font-family:'Liberation Sans', sans-serif;color:#000;font-weight:bold;transform:scaleX(0.85);transform-origin:0 0;">0</div>
<div class="t" style="left:1372.30px;top:300.85px;font-size:7.5px;font-family:'Liberation Sans', sans-serif;color:#000;font-weight:bold;transform:scaleX(0.85);transform-origin:0 0;">50</div>
<div class="t" style="left:1490.40px;top:300.85px;font-size:7.5px;font-family:'Liberation Sans', sans-serif;color:#000;font-weight:bold;transform:scaleX(0.78);transform-origin:0 0;">100m</div>
<div class="r" style="left:1256px;top:310px;width:1px;height:9px;background:#000;"></div>
<div class="r" style="left:1256px;top:315px;width:31px;height:4px;background:#000;"></div>
<div class="r" style="left:1287px;top:311px;width:29px;height:4px;background:#000;"></div>
<div class="r" style="left:1316px;top:315px;width:59px;height:4px;background:#000;"></div>
<div class="r" style="left:1375px;top:311px;width:119px;height:4px;background:#000;"></div>
<div class="t" style="left:1553.20px;top:220.53px;font-size:36px;font-family:'Liberation Sans', sans-serif;color:#000;transform:scaleX(0.92);transform-origin:0 0;-webkit-text-stroke:1.2px #000;">N</div>
<svg class="r" style="left:1540px;top:250px;" width="50" height="100" viewBox="0 0 50 100"><path d="M23.8 3L5.8 96.7L23.8 84.2Z" fill="#fff" stroke="#000" stroke-width="1"/><path d="M23.8 3L42.9 96.7L23.8 84.2Z" fill="#000" stroke="#000" stroke-width="1"/></svg>
<svg class="r" style="left:798px;top:365px;" width="96" height="100" viewBox="0 0 96 100"><g transform="scale(0.10278)">
<path d="M135 80L165 75L170 95L195 90L195 68L225 64L230 85L250 80L250 55L278 55L290 110H385V40H415V60H440V40H470V60H500V40H530V110H640L645 55L673 55L673 80L692 85L697 64L727 68L727 90L752 95L757 75L787 80L740 230Q460 300 180 230Z" fill="#ffffff" stroke="#8dbbe6" stroke-width="9"/>
<path d="M180 200Q460 265 740 200" fill="none" stroke="#8dbbe6" stroke-width="9"/>
<path d="M185 235Q460 300 735 235" fill="none" stroke="#8dbbe6" stroke-width="9"/>
<path d="M290 110L300 195M385 110V185M530 110V185M640 110L630 195" stroke="#8dbbe6" stroke-width="8"/>
<path d="M250 215H320M350 222H420M480 222H550M590 215H660" stroke="#8dbbe6" stroke-width="10" stroke-dasharray="14 8"/>
<rect x="212" y="115" width="26" height="80" rx="12" fill="#ffffff" stroke="#9aa6b0" stroke-width="9" transform="rotate(-8 225 155)"/>
<rect x="445" y="90" width="28" height="80" rx="12" fill="#ffffff" stroke="#9aa6b0" stroke-width="9"/>
<rect x="680" y="115" width="26" height="80" rx="12" fill="#ffffff" stroke="#9aa6b0" stroke-width="9" transform="rotate(8 693 155)"/>
<path d="M112 280H805V640C805 760 640 840 460 875C280 840 112 760 112 640Z" fill="#0865b9"/>
<path id="band" d="M30 640H58L62 655L80 645C95 800 270 905 460 925C650 905 825 800 840 645L858 655L862 640H895C885 820 700 960 460 968C220 960 40 820 30 640Z" fill="#1a6cc0"/>
<path id="bt" d="M62 690C110 870 290 958 460 958C630 958 810 870 858 690" fill="none"/>
<text font-family="Liberation Sans" font-weight="bold" font-size="36" fill="#ffffff" letter-spacing="8"><textPath href="#bt" startOffset="4%">IN FIDE ET JUSTITIA FORTITUDO</textPath></text>
<path d="M370 298H545V325H370Z" fill="#ffffff"/>
<path d="M378 325C370 360 420 360 420 340H495C495 360 545 360 537 325Z" fill="#ffffff"/>
<path d="M408 345H508L500 420H415Z" fill="#ffffff"/>
<path d="M432 400C432 355 488 355 488 400Z" fill="#0865b9"/>
<path d="M415 420H500L525 760H392Z" fill="#ffffff"/>
<path d="M380 760H540V800H380Z" fill="#dfeefb"/>
<g fill="#ffffff" stroke="#bcd6f0" stroke-width="5">
<ellipse cx="280" cy="825" rx="32" ry="20"/><ellipse cx="345" cy="815" rx="32" ry="20"/><ellipse cx="410" cy="812" rx="32" ry="20"/><ellipse cx="475" cy="812" rx="32" ry="20"/><ellipse cx="540" cy="815" rx="32" ry="20"/><ellipse cx="605" cy="822" rx="32" ry="20"/><ellipse cx="640" cy="830" rx="28" ry="18"/>
<ellipse cx="315" cy="850" rx="32" ry="18"/><ellipse cx="380" cy="848" rx="32" ry="18"/><ellipse cx="445" cy="848" rx="32" ry="18"/><ellipse cx="510" cy="848" rx="32" ry="18"/><ellipse cx="575" cy="850" rx="32" ry="18"/>
</g>
<path d="M290 410L575 625M245 688L635 405" stroke="#5a9ad8" stroke-width="17"/><path d="M290 410L575 625" stroke="#ffffff" stroke-width="11"/>
<path d="M255 465L300 420L345 470L300 510Z" fill="#ffffff"/>
<path d="M280 465L300 445L322 467L300 487Z" fill="#0865b9"/>
<path d="M560 640C545 610 590 590 610 605C640 590 690 610 680 645C690 670 650 700 620 690C600 705 550 690 560 660Z" fill="#0865b9" stroke="#ffffff" stroke-width="10"/>
<path d="M245 688L635 405" stroke="#ffffff" stroke-width="9"/>
<path d="M290 630L330 680" stroke="#ffffff" stroke-width="12"/>
</g></svg>
<div class="t" style="left:814.00px;top:483.15px;font-size:15.1px;font-family:'Liberation Serif', serif;color:#000;">Drammen</div>
<div class="t" style="left:814.00px;top:500.87px;font-size:15.2px;font-family:'Liberation Serif', serif;color:#000;">kommune</div>
<div class="t" style="left:916.00px;top:372.50px;font-size:20.9px;font-family:'Liberation Serif', serif;color:#000;font-weight:bold;">Områderegulering</div>
<div class="t" style="left:916.00px;top:479.24px;font-size:20.85px;font-family:'Liberation Serif', serif;color:#000;font-weight:bold;">Med tilhørende reguleringsbestemmelser</div>
<div class="t" style="left:1388.00px;top:372.14px;font-size:15px;font-family:'Liberation Serif', serif;color:#000;">Arealplan-ID:</div>
<div class="t" style="left:1388.00px;top:399.94px;font-size:15px;font-family:'Liberation Serif', serif;color:#000;">0602_12345</div>
<div class="t" style="left:1388.00px;top:451.34px;font-size:15px;font-family:'Liberation Serif', serif;color:#000;">Forslagsstiller:</div>
<div class="t" style="left:1388.00px;top:473.94px;font-size:15px;font-family:'Liberation Serif', serif;color:#000;">XXX</div>
<div class="t" style="left:797.40px;top:530.30px;font-size:20.9px;font-family:'Liberation Serif', serif;color:#000;font-weight:bold;">SAKSBEHANDLING ETTER PLAN- OG BYGNINGSLOVEN</div>
<div class="t" style="left:1386.70px;top:521.17px;font-size:15.2px;font-family:'Liberation Serif', serif;color:#000;">SAKS-</div>
<div class="t" style="left:1387.00px;top:537.67px;font-size:15.2px;font-family:'Liberation Serif', serif;color:#000;">NR</div>
<div class="t" style="left:1466.90px;top:521.17px;font-size:15.2px;font-family:'Liberation Serif', serif;color:#000;">DATO</div>
<div class="t" style="left:1545.00px;top:521.17px;font-size:15.2px;font-family:'Liberation Serif', serif;color:#000;">SIGN</div>
<div class="t" style="left:797.50px;top:591.07px;font-size:15.2px;font-family:'Liberation Serif', serif;color:#000;">Dato</div>
<div class="t" style="left:854.80px;top:591.07px;font-size:15.2px;font-family:'Liberation Serif', serif;color:#000;">XXX</div>
<div class="t" style="left:953.70px;top:592.07px;font-size:15.2px;font-family:'Liberation Serif', serif;color:#000;">Revisjon</div>
<div class="t" style="left:1048.00px;top:591.07px;font-size:15.2px;font-family:'Liberation Serif', serif;color:#000;">XXX</div>
<div class="t" style="left:797.50px;top:614.77px;font-size:15.2px;font-family:'Liberation Serif', serif;color:#000;">Dato</div>
<div class="t" style="left:854.80px;top:614.77px;font-size:15.2px;font-family:'Liberation Serif', serif;color:#000;">XXX</div>
<div class="t" style="left:953.70px;top:615.77px;font-size:15.2px;font-family:'Liberation Serif', serif;color:#000;">Revisjon</div>
<div class="t" style="left:1048.00px;top:614.77px;font-size:15.2px;font-family:'Liberation Serif', serif;color:#000;">XXX</div>
<div class="t" style="left:797.50px;top:638.47px;font-size:15.2px;font-family:'Liberation Serif', serif;color:#000;">Dato</div>
<div class="t" style="left:854.80px;top:638.47px;font-size:15.2px;font-family:'Liberation Serif', serif;color:#000;">XXX</div>
<div class="t" style="left:953.70px;top:639.47px;font-size:15.2px;font-family:'Liberation Serif', serif;color:#000;">Revisjon</div>
<div class="t" style="left:1048.00px;top:638.47px;font-size:15.2px;font-family:'Liberation Serif', serif;color:#000;">XXX</div>
<div class="t" style="left:797.50px;top:662.07px;font-size:15.2px;font-family:'Liberation Serif', serif;color:#000;font-weight:bold;">Kommunestyret sitt vedtak</div>
<div class="t" style="left:797.50px;top:686.99px;font-size:15.3px;font-family:'Liberation Serif', serif;color:#000;">Ny 2. gang behandling</div>
<div class="t" style="left:797.50px;top:710.19px;font-size:15.3px;font-family:'Liberation Serif', serif;color:#000;">Offentlig ettersyn fra ....... til ......</div>
<div class="t" style="left:797.50px;top:733.19px;font-size:15.3px;font-family:'Liberation Serif', serif;color:#000;">2. gangs behandling</div>
<div class="t" style="left:797.50px;top:756.29px;font-size:15.3px;font-family:'Liberation Serif', serif;color:#000;">Offentlig ettersyn fra ........ til .........</div>
<div class="t" style="left:797.50px;top:779.99px;font-size:15.3px;font-family:'Liberation Serif', serif;color:#000;">1. gangs behandling</div>
<div class="t" style="left:797.50px;top:802.99px;font-size:15.3px;font-family:'Liberation Serif', serif;color:#000;">Kunngjøring av oppstart av planarbeid</div>
<div class="t" style="left:797.50px;top:825.69px;font-size:15.3px;font-family:'Liberation Serif', serif;color:#000;">Oppstartsmøte...</div>
<div class="t" style="left:797.00px;top:850.31px;font-size:14.75px;font-family:'Liberation Sans', sans-serif;color:#000;">PLANEN ER UTARBEIDET AV:</div>
<div class="t" style="left:1174.70px;top:849.57px;font-size:15.2px;font-family:'Liberation Serif', serif;color:#000;">PLANKONSULENT</div>
<div class="t" style="left:1388.00px;top:849.24px;font-size:15px;font-family:'Liberation Serif', serif;color:#000;">TEGNNR.</div>
<div class="t" style="left:1466.30px;top:849.07px;font-size:15.2px;font-family:'Liberation Serif', serif;color:#000;">DATO</div>
<div class="t" style="left:1544.40px;top:849.07px;font-size:15.2px;font-family:'Liberation Serif', serif;color:#000;">SIGN.</div>
<div class="t" style="left:797.50px;top:890.94px;font-size:15.35px;font-family:'Liberation Serif', serif;color:#000;">Det bekreftes at planen er i samsvar med kommunestyrets vedtak av</div>
<svg class="r" style="left:1036px;top:848px;" width="106" height="40" viewBox="0 0 106 40"><g fill="none" stroke="#1d6cc2" stroke-width="2.7"><path d="M6.9 24.1V9.5C6.9 5.8 8.5 4.4 11.5 4.4H16.8"/><path d="M13.8 16.8C13.8 12.3 15.3 10.8 19.8 10.8H25C29.5 10.8 30.9 12.3 30.9 16.8C30.9 21.4 29.5 22.9 25 22.9H19.8C15.3 22.9 13.8 21.4 13.8 16.8Z"/><path d="M55.5 13.8C55.5 11.6 54.2 10.8 51 10.8H45C40.5 10.8 39 12.3 39 16.8C39 21.4 40.5 22.9 45 22.9H51C54.2 22.9 55.5 22 55.5 19.8"/><path d="M61 9.3V17C61 21.4 62.5 22.9 67 22.9H72.5C77 22.9 78.2 21.4 78.2 17V9.3M78.2 17V24.4"/><path d="M101.3 13.6C101.3 11.6 100 10.8 97 10.8H88.5C85.2 10.8 83.8 11.8 83.8 13.8C83.8 15.9 85.2 16.8 88.5 16.8H96.8C100 16.8 101.4 17.8 101.4 19.9C101.4 22 100 22.9 96.8 22.9H88.3C85.2 22.9 83.8 22 83.8 20"/></g><path d="M3.1 10.7H14" stroke="#1d6cc2" stroke-width="2.2"/><text x="5.5" y="36.9" font-family="Liberation Sans" font-size="10.4" fill="#777777" textLength="97.5" lengthAdjust="spacingAndGlyphs">SOFTWARE</text></svg>
<div class="t" style="left:1316.60px;top:892.96px;font-size:9.6px;font-family:'Liberation Serif', serif;color:#000;letter-spacing:0.35px;">BekreftDato</div>
<div class="t" style="left:1405.60px;top:892.96px;font-size:9.6px;font-family:'Liberation Serif', serif;color:#000;letter-spacing:0.7px;">PLANSJEFNAVN</div>
<div class="r" style="left:1301px;top:903px;width:206px;height:1px;background:#222;"></div>
<div class="t" style="left:1332.00px;top:906.96px;font-size:9.6px;font-family:'Liberation Serif', serif;color:#000;letter-spacing:0.6px;">Dato</div>
<div class="t" style="left:1428.20px;top:906.96px;font-size:9.6px;font-family:'Liberation Serif', serif;color:#000;letter-spacing:0.5px;">Plansjef</div>
<svg class="r" style="left:1816px;top:170px;" width="56" height="16" viewBox="0 0 56 16"><rect x="2" y="7" width="12" height="5" fill="#e8e8e8" stroke="#444" stroke-width="0.8"/><rect x="26" y="1" width="10" height="10" fill="none" stroke="#444" stroke-width="3"/><rect x="26" y="1" width="10" height="10" fill="none" stroke="#eee" stroke-width="1.5"/><rect x="23" y="4" width="10" height="10" fill="#eee" stroke="#444" stroke-width="0.8"/><rect x="26" y="7" width="4" height="4" fill="#555"/><path d="M43 2L52 11M52 2L43 11" stroke="#555" stroke-width="4.5"/><path d="M43 2L52 11M52 2L43 11" stroke="#f2f2f2" stroke-width="2.8"/></svg>
<svg class="r" style="left:1842px;top:421px;" width="36" height="136" viewBox="0 0 36 136"><rect x="1.5" y="1.5" width="33" height="133" rx="4" fill="#a2a2a2" stroke="#787878" stroke-width="2"/><rect x="3" y="3" width="30" height="130" rx="3" fill="none" stroke="#acacac" stroke-width="1"/><circle cx="28.5" cy="7" r="3.5" fill="#b4b4b4" stroke="#8a8a8a" stroke-width="0.8"/><path d="M27 5.5L30 8.5M30 5.5L27 8.5" stroke="#7a7a7a" stroke-width="0.8"/><path d="M3 12.5H33M6 48H30" stroke="#959595" stroke-width="1"/><path d="M17 40C8 40 6 36 6 31C6 24 10 21 17 21C24 21 27 24 27 30" fill="none" stroke="#8e8e8e" stroke-width="1.4"/><circle cx="16" cy="30" r="5" fill="none" stroke="#8e8e8e" stroke-width="1.4"/><path d="M19 34L23 38" stroke="#8e8e8e" stroke-width="1.4"/><text x="17" y="44" font-family="Liberation Sans" font-weight="bold" font-size="9" fill="#8e8e8e">2D</text><path d="M10 67C7 63 6 61 8 60C10 59 12 62 13 63V54C13 52 16 52 16 54V61V52C16 50 19 50 19 52V61V53C19 51 22 51 22 53V62V56C22 54 25 54 25 56V66C25 72 22 75 17 75C13 75 12 72 10 67Z" fill="none" stroke="#8e8e8e" stroke-width="1.3"/><path d="M7 81L21 95M21 81L7 95M7 81H11M7 81V85M21 81H17M21 81V85M7 95H11M7 95V91" stroke="#8e8e8e" stroke-width="1.3" fill="none"/><circle cx="24" cy="98" r="5" fill="#a2a2a2" stroke="#8e8e8e" stroke-width="1.4"/><path d="M27.5 101.5L31 105" stroke="#8e8e8e" stroke-width="2.2"/><path d="M15 111H21L18 114Z" fill="#8a8a8a"/><circle cx="28" cy="127" r="3.5" fill="#b0b0b0" stroke="#8a8a8a" stroke-width="0.8"/><path d="M26 126.5H30M26 128H30" stroke="#7a7a7a" stroke-width="0.7"/></svg>
<div class="r" style="left:1880px;top:162px;width:24px;height:754px;background:#535353;"></div>
<div class="r" style="left:1880px;top:162px;width:24px;height:754px;background:#525252;"></div>
<div class="r" style="left:1884px;top:162px;width:20px;height:555px;background:#5a5a5a;border-left:1px solid #333;border-bottom:1px solid #333;box-sizing:border-box;"></div>
<div class="r" style="left:1884px;top:718px;width:20px;height:76px;background:#5a5a5a;border-left:1px solid #333;border-top:1px solid #333;border-bottom:1px solid #333;box-sizing:border-box;"></div>
<div class="r" style="left:1885px;top:170px;width:19px;height:1px;background:#444;"></div>
<div class="r" style="left:1885px;top:727px;width:19px;height:1px;background:#444;"></div>
<svg class="r" style="left:1888px;top:164px;" width="16" height="5" viewBox="0 0 16 5"><g fill="#1a1a1a"><rect x="0" y="0" width="1" height="1"/><rect x="2" y="0" width="1" height="1"/><rect x="4" y="0" width="1" height="1"/><rect x="6" y="0" width="1" height="1"/><rect x="8" y="0" width="1" height="1"/><rect x="10" y="0" width="1" height="1"/><rect x="12" y="0" width="1" height="1"/><rect x="14" y="0" width="1" height="1"/><rect x="1" y="2" width="1" height="1"/><rect x="3" y="2" width="1" height="1"/><rect x="5" y="2" width="1" height="1"/><rect x="7" y="2" width="1" height="1"/><rect x="9" y="2" width="1" height="1"/><rect x="11" y="2" width="1" height="1"/><rect x="13" y="2" width="1" height="1"/><rect x="15" y="2" width="1" height="1"/><rect x="0" y="4" width="1" height="1"/><rect x="2" y="4" width="1" height="1"/><rect x="4" y="4" width="1" height="1"/><rect x="6" y="4" width="1" height="1"/><rect x="8" y="4" width="1" height="1"/><rect x="10" y="4" width="1" height="1"/><rect x="12" y="4" width="1" height="1"/><rect x="14" y="4" width="1" height="1"/></g></svg>
<svg class="r" style="left:1888px;top:721px;" width="16" height="5" viewBox="0 0 16 5"><g fill="#1a1a1a"><rect x="0" y="0" width="1" height="1"/><rect x="2" y="0" width="1" height="1"/><rect x="4" y="0" width="1" height="1"/><rect x="6" y="0" width="1" height="1"/><rect x="8" y="0" width="1" height="1"/><rect x="10" y="0" width="1" height="1"/><rect x="12" y="0" width="1" height="1"/><rect x="14" y="0" width="1" height="1"/><rect x="1" y="2" width="1" height="1"/><rect x="3" y="2" width="1" height="1"/><rect x="5" y="2" width="1" height="1"/><rect x="7" y="2" width="1" height="1"/><rect x="9" y="2" width="1" height="1"/><rect x="11" y="2" width="1" height="1"/><rect x="13" y="2" width="1" height="1"/><rect x="15" y="2" width="1" height="1"/><rect x="0" y="4" width="1" height="1"/><rect x="2" y="4" width="1" height="1"/><rect x="4" y="4" width="1" height="1"/><rect x="6" y="4" width="1" height="1"/><rect x="8" y="4" width="1" height="1"/><rect x="10" y="4" width="1" height="1"/><rect x="12" y="4" width="1" height="1"/><rect x="14" y="4" width="1" height="1"/></g></svg>
<svg class="r" style="left:1886px;top:174px;overflow:hidden;" width="18" height="18" viewBox="0 0 18 18"><path d="M2.5 1V16" stroke="#e8e8e8" stroke-width="1.2"/><path d="M3 2A13 13 0 0 1 16 14L3 2Z" fill="#d6dde4"/><path d="M9 3A13 13 0 0 1 16 11" fill="none" stroke="#4a90e2" stroke-width="1.6"/><path d="M3 2L16 15" stroke="#1a1a1a" stroke-width="1"/></svg>
<svg class="r" style="left:1886px;top:196px;overflow:hidden;" width="18" height="18" viewBox="0 0 18 18"><path d="M2.5 1V15H17" stroke="#e8e8e8" stroke-width="1.2" stroke-dasharray="2 1.5" fill="none"/><path d="M3 15V5A10 10 0 0 1 10 8Z" fill="#dcdcdc"/><path d="M3 5A10 10 0 0 1 10 8" fill="none" stroke="#4a90e2" stroke-width="1.4"/><path d="M3 15L16 4" stroke="#e8e8e8" stroke-width="1.2"/></svg>
<svg class="r" style="left:1886px;top:218px;overflow:hidden;" width="18" height="18" viewBox="0 0 18 18"><path d="M5.5 1V16" stroke="#e8e8e8" stroke-width="1.2" stroke-dasharray="2 1.5"/><path d="M6 2A13 13 0 0 1 15 13L6 2Z" fill="#dcdcdc"/><path d="M6 2A13 13 0 0 1 15 12" fill="none" stroke="#4a90e2" stroke-width="1.5"/><path d="M6 2L15 14" stroke="#1a1a1a" stroke-width="1"/></svg>
<svg class="r" style="left:1886px;top:240px;overflow:hidden;" width="18" height="18" viewBox="0 0 18 18"><path d="M5.5 1V16" stroke="#e8e8e8" stroke-width="1.2" stroke-dasharray="2 1.5"/><path d="M6 13V5A8 8 0 0 1 11 7Z" fill="#dcdcdc" stroke="#4a90e2" stroke-width="1"/><path d="M6 14L17 3" stroke="#e8e8e8" stroke-width="1.2"/></svg>
<svg class="r" style="left:1886px;top:263px;overflow:hidden;" width="18" height="18" viewBox="0 0 18 18"><path d="M2 1H9L12 4V14H2Z" fill="#e8e8e8" stroke="#222" stroke-width="0.8"/><path d="M5 3V13" stroke="#aaa"/><rect x="10" y="9" width="7" height="7" fill="#e8e8e8" stroke="#222" stroke-width="0.8"/><path d="M12.3 9V16M14.7 9V16M10 11.3H17M10 13.7H17" stroke="#222" stroke-width="0.6"/></svg>
<svg class="r" style="left:1886px;top:285px;overflow:hidden;" width="18" height="18" viewBox="0 0 18 18"><circle cx="8" cy="8" r="7" fill="#5ea8e8"/><path d="M6 3C9 4 8 6 10 7M5 9C7 10 6 12 8 13" stroke="#dff" stroke-width="1" fill="none"/><rect x="10" y="9" width="7" height="7" fill="#e8e8e8" stroke="#222" stroke-width="0.8"/><path d="M12.3 9V16M14.7 9V16M10 11.3H17M10 13.7H17" stroke="#222" stroke-width="0.6"/></svg>
<svg class="r" style="left:1886px;top:307px;overflow:hidden;" width="18" height="18" viewBox="0 0 18 18"><circle cx="8.5" cy="8" r="7.2" fill="#c9c9c9" stroke="#333" stroke-width="0.8"/><path d="M1.5 8H15.5M8.5 1V15M3 4.5H14M3 11.5H14M5 1.8C3 6 3 10 5 14.2M12 1.8C14 6 14 10 12 14.2" stroke="#fff" stroke-width="0.8" fill="none"/><rect x="4" y="5" width="4" height="3" fill="none" stroke="#222" stroke-width="0.8"/></svg>
<svg class="r" style="left:1886px;top:329px;overflow:hidden;" width="18" height="18" viewBox="0 0 18 18"><path d="M8 1V15M1 8H15" stroke="#f0f0f0" stroke-width="1.3"/><path d="M8 4L12 8L8 12L4 8Z" fill="#5a5a5a" stroke="#f0f0f0" stroke-width="1.3"/><path d="M12 11V16M15 11V16M10.5 12.5H17M10.5 14.5H17" stroke="#e0e0e0" stroke-width="0.9"/></svg>
<svg class="r" style="left:1886px;top:351px;overflow:hidden;" width="18" height="18" viewBox="0 0 18 18"><path d="M8 1V15M1 8H15" stroke="#f0f0f0" stroke-width="1.3"/><path d="M8 4L12 8L8 12L4 8Z" fill="#5a5a5a" stroke="#f0f0f0" stroke-width="1.3"/><text x="11" y="16" font-family="Liberation Sans" font-size="8" fill="#e0e0e0">A</text></svg>
<svg class="r" style="left:1886px;top:373px;overflow:hidden;" width="18" height="18" viewBox="0 0 18 18"><path d="M8 1V15M1 8H15" stroke="#f0f0f0" stroke-width="1.3"/><path d="M8 4L12 8L8 12L4 8Z" fill="#5a5a5a" stroke="#f0f0f0" stroke-width="1.3"/><path d="M9 7L9 16L11 14L13 17L14 16L12 13L15 13Z" fill="#f4f4f4" stroke="#222" stroke-width="0.6"/></svg>
<svg class="r" style="left:1886px;top:395px;overflow:hidden;" width="18" height="18" viewBox="0 0 18 18"><path d="M8 1V15M1 8H15" stroke="#f0f0f0" stroke-width="1.3"/><path d="M8 4L12 8L8 12L4 8Z" fill="#5a5a5a" stroke="#f0f0f0" stroke-width="1.3"/><circle cx="12" cy="12" r="3" fill="#9fd0f4" stroke="#eee" stroke-width="1"/><path d="M14 14L17 17" stroke="#eee" stroke-width="1.4"/></svg>
<svg class="r" style="left:1886px;top:417px;overflow:hidden;" width="18" height="18" viewBox="0 0 18 18"><path d="M3.5 1V16" stroke="#e8e8e8" stroke-width="1.2" stroke-dasharray="2 1.5"/><path d="M7 12L15 3L12 12Z" fill="#e8e8e8" stroke="#bbb" stroke-width="0.6"/><path d="M15 3L13 12" stroke="#3c8ee0" stroke-width="1.6"/></svg>
<svg class="r" style="left:1886px;top:439px;overflow:hidden;" width="18" height="18" viewBox="0 0 18 18"><path d="M6 6V17" stroke="#c85030" stroke-width="1.2"/><path d="M1 3H4M9 3H11M2 8H4" stroke="#5aa0f0" stroke-width="1.1"/><rect x="4" y="1" width="4" height="4" fill="#f0f0f0"/><rect x="5" y="2" width="2" height="2" fill="#d04a2a"/><path d="M12 2C16 3 17 6 15 8M12 9L17 10" stroke="#5aa0f0" stroke-width="1.1" fill="none" stroke-dasharray="2 1"/></svg>
<svg class="r" style="left:1886px;top:466px;overflow:hidden;" width="18" height="18" viewBox="0 0 18 18"><path d="M8 1V11M3 6H13" stroke="#f0f0f0" stroke-width="1.2"/><path d="M8 3L11 6L8 9L5 6Z" fill="#5a5a5a" stroke="#f0f0f0" stroke-width="1.2"/><path d="M1 11H8L5.5 14V17L3.5 16V14Z" fill="#d8d8d8"/><path d="M12 10V17L14 15L16 17L17 16L15 14L17 13Z" fill="#f4f4f4" stroke="#222" stroke-width="0.6"/></svg>
<svg class="r" style="left:1886px;top:494px;overflow:hidden;" width="18" height="18" viewBox="0 0 18 18"><path d="M1 12.5H4M6 12.5H8" stroke="#5aa0f0" stroke-width="1.2"/><rect x="3.5" y="10.5" width="4" height="4" fill="#f4f4f4"/><rect x="4.5" y="11.5" width="2" height="2" fill="#d04a2a"/><path d="M10 11V14M12 11C15 11 16 13 16 14" stroke="#5aa0f0" stroke-width="1.2" fill="none"/><path d="M5.5 1V10" stroke="#c85030" stroke-width="1.2"/><path d="M9 16H12M14 14L16 12" stroke="#5aa0f0" stroke-width="1.1"/></svg>
<svg class="r" style="left:1886px;top:516px;overflow:hidden;" width="18" height="18" viewBox="0 0 18 18"><path d="M2 5L6 1L10 5V10H2Z" fill="#e8e8e8" stroke="#222" stroke-width="0.8"/><path d="M4 7H8" stroke="#777"/><path d="M1 12.5H4M6 12.5H8" stroke="#5aa0f0" stroke-width="1.2"/><rect x="3.5" y="10.5" width="4" height="4" fill="#f4f4f4"/><rect x="4.5" y="11.5" width="2" height="2" fill="#d04a2a"/><path d="M10 11V14M12 11C15 11 16 13 16 14" stroke="#5aa0f0" stroke-width="1.2" fill="none"/></svg>
<svg class="r" style="left:1886px;top:539px;overflow:hidden;" width="18" height="18" viewBox="0 0 18 18"><path d="M6 1L10.5 5.5L6 10L1.5 5.5Z" fill="#5a5a5a" stroke="#f0f0f0" stroke-width="1.4"/><path d="M1 12.5H4M6 12.5H8" stroke="#5aa0f0" stroke-width="1.2"/><rect x="3.5" y="10.5" width="4" height="4" fill="#f4f4f4"/><rect x="4.5" y="11.5" width="2" height="2" fill="#d04a2a"/><path d="M10 11V14M12 11C15 11 16 13 16 14" stroke="#5aa0f0" stroke-width="1.2" fill="none"/></svg>
<svg class="r" style="left:1886px;top:565px;overflow:hidden;" width="18" height="18" viewBox="0 0 18 18"><path d="M2.5 2V15.5H17" stroke="#e8e8e8" stroke-width="1.2" stroke-dasharray="2 1.5" fill="none"/><path d="M3 6H11V15" stroke="#4a90e2" stroke-width="1.3" fill="none"/><rect x="10" y="4" width="3.5" height="3.5" fill="none" stroke="#e8e8e8" stroke-width="1"/></svg>
<svg class="r" style="left:1886px;top:587px;overflow:hidden;" width="18" height="18" viewBox="0 0 18 18"><path d="M2.5 8V15.5H17" stroke="#e8e8e8" stroke-width="1.2" stroke-dasharray="2 1.5" fill="none"/><path d="M3 15L12 6M12 7V15" stroke="#4a90e2" stroke-width="1.3" fill="none"/><rect x="11" y="4" width="3.5" height="3.5" fill="none" stroke="#e8e8e8" stroke-width="1"/><path d="M2 7L8 1M5 1H8V4" stroke="#e8e8e8" stroke-width="1" fill="none"/></svg>
<svg class="r" style="left:1886px;top:609px;overflow:hidden;" width="18" height="18" viewBox="0 0 18 18"><path d="M2.5 2V15.5" stroke="#e8e8e8" stroke-width="1.2" stroke-dasharray="2 1.5" fill="none"/><path d="M3 5H10" stroke="#e8e8e8" stroke-width="1"/><path d="M3 14L10 6" stroke="#4a90e2" stroke-width="1.3"/><rect x="9" y="3" width="3.5" height="3.5" fill="none" stroke="#e8e8e8" stroke-width="1"/><path d="M9 14L16 7M13 7H16V10" stroke="#e8e8e8" stroke-width="1" fill="none"/></svg>
<svg class="r" style="left:1886px;top:631px;overflow:hidden;" width="18" height="18" viewBox="0 0 18 18"><path d="M2 8L8 2M5 2H8V5" stroke="#e8e8e8" stroke-width="1" fill="none"/><path d="M3 15L11 7" stroke="#4a90e2" stroke-width="1.3"/><rect x="10" y="5" width="3" height="3" fill="none" stroke="#e8e8e8" stroke-width="1"/><path d="M6 15H17M8 13L6 15L8 17M15 13L17 15L15 17" stroke="#e8e8e8" stroke-width="1" fill="none"/></svg>
<svg class="r" style="left:1886px;top:654px;overflow:hidden;" width="18" height="18" viewBox="0 0 18 18"><circle cx="8" cy="8" r="7" fill="#e6e6e6" stroke="#444" stroke-width="0.8"/><path d="M3 6L8 10" stroke="#444"/><path d="M7 11L14 7L17 11L10 16Z" fill="#c06a3a"/></svg>
<svg class="r" style="left:1886px;top:676px;overflow:hidden;" width="18" height="18" viewBox="0 0 18 18"><path d="M1 12L5 16M3 14L14 3M12 1L16 5" stroke="#e8e8e8" stroke-width="1" fill="none"/><path d="M5 11L13 6L16 10L8 15Z" fill="#c06a3a"/></svg>
<svg class="r" style="left:1886px;top:698px;overflow:hidden;" width="18" height="18" viewBox="0 0 18 18"><path d="M2 15C2 8 7 3 14 2" stroke="#e8e8e8" stroke-width="1" fill="none"/><rect x="0.5" y="12.5" width="3" height="3" fill="none" stroke="#e8e8e8"/><rect x="6.5" y="5.5" width="3" height="3" fill="none" stroke="#e8e8e8"/><rect x="11" y="8" width="7" height="9" fill="#5aa0f0"/><path d="M12.5 10H16.5M12.5 12.5H16.5M12.5 15H16.5" stroke="#fff" stroke-width="0.9" stroke-dasharray="1 1"/></svg>
<svg class="r" style="left:1886px;top:730px;overflow:hidden;" width="18" height="18" viewBox="0 0 18 18"><path d="M8 1V11M3 6H13" stroke="#f0f0f0" stroke-width="1.2"/><path d="M8 3L11 6L8 9L5 6Z" fill="#5a5a5a" stroke="#f0f0f0" stroke-width="1.2"/><path d="M1 11H8L5.5 14V17L3.5 16V14Z" fill="#d8d8d8"/><path d="M12 10V17L14 15L16 17L17 16L15 14L17 13Z" fill="#f4f4f4" stroke="#222" stroke-width="0.6"/></svg>
<svg class="r" style="left:1886px;top:752px;overflow:hidden;" width="18" height="18" viewBox="0 0 18 18"><path d="M2 1H8L11 4V10H2Z" fill="#e8e8e8" stroke="#222" stroke-width="0.8"/><path d="M1 11H9L6 14V17L4 16V14Z" fill="#d8d8d8"/><rect x="11" y="9" width="7" height="7" fill="#e8e8e8" stroke="#222" stroke-width="0.8"/><path d="M13.3 9V16M15.7 9V16M11 11.3H18M11 13.7H18" stroke="#222" stroke-width="0.6"/></svg>
<svg class="r" style="left:1886px;top:774px;overflow:hidden;" width="18" height="18" viewBox="0 0 18 18"><path d="M8 1V11M3 6H13" stroke="#f0f0f0" stroke-width="1.2"/><path d="M8 3L11 6L8 9L5 6Z" fill="#5a5a5a" stroke="#f0f0f0" stroke-width="1.2"/><path d="M1 11H8L5.5 14V17L3.5 16V14Z" fill="#d8d8d8"/><path d="M12 11V17M15 11V17M10.5 12.5H17M10.5 15H17" stroke="#e0e0e0" stroke-width="0.9"/></svg>
<div class="r" style="left:1885px;top:460px;width:19px;height:2px;background:#dedede;"></div>
<div class="r" style="left:1885px;top:488px;width:19px;height:2px;background:#dedede;"></div>
<div class="r" style="left:1885px;top:559px;width:19px;height:2px;background:#dedede;"></div>
<div class="r" style="left:0px;top:916px;width:1904px;height:3px;background:linear-gradient(#484848,#6a6a6a);"></div>
<div class="r" style="left:0px;top:919px;width:1904px;height:35px;background:#c8c8c8;"></div>
<div class="r" style="left:0px;top:954px;width:1904px;height:1px;background:#7c7c7c;"></div>
<div class="r" style="left:0px;top:955px;width:1904px;height:18px;background:#fdfdfd;"></div>
<div class="r" style="left:0px;top:918px;width:17px;height:55px;background:#505050;"></div>
<svg class="r" style="left:1px;top:921px;" width="14" height="5" viewBox="0 0 14 5"><g fill="#9a9a9a"><rect x="0" y="0" width="1" height="1"/><rect x="2" y="0" width="1" height="1"/><rect x="4" y="0" width="1" height="1"/><rect x="6" y="0" width="1" height="1"/><rect x="8" y="0" width="1" height="1"/><rect x="10" y="0" width="1" height="1"/><rect x="12" y="0" width="1" height="1"/><rect x="1" y="2" width="1" height="1"/><rect x="3" y="2" width="1" height="1"/><rect x="5" y="2" width="1" height="1"/><rect x="7" y="2" width="1" height="1"/><rect x="9" y="2" width="1" height="1"/><rect x="11" y="2" width="1" height="1"/></g></svg>
<svg class="r" style="left:1px;top:935px;" width="12" height="11" viewBox="0 0 12 11"><path d="M1 1L10 10M10 1L1 10" stroke="#f0f0f0" stroke-width="1.8"/></svg>
<svg class="r" style="left:0px;top:956px;" width="14" height="15" viewBox="0 0 14 15"><path d="M1 14L7.5 7.5" stroke="#eee" stroke-width="2.2"/><path d="M6 9C4.5 5 7.5 1.5 12 2.5L9.5 5L10.5 6.5L13 4.5C13.5 8.5 10 10.5 6 9Z" fill="#eee"/></svg>
<div class="t" style="left:18.90px;top:925.93px;font-size:11.7px;font-family:'Liberation Mono', monospace;color:#0a0a0a;">Command: *Cancel*</div>
<div class="t" style="left:18.90px;top:940.93px;font-size:11.7px;font-family:'Liberation Mono', monospace;color:#0a0a0a;">Command: Specify opposite corner or [Fence/WPolygon/CPolygon]:</div>
<svg class="r" style="left:22px;top:960px;" width="24" height="12" viewBox="0 0 24 12"><rect x="0.5" y="0.5" width="15" height="11" fill="#fff" stroke="#555"/><rect x="0.5" y="0.5" width="15" height="2" fill="#555"/><path d="M3 5L5 7L3 9M6 9H9" stroke="#333" fill="none"/><path d="M18 5H24L21 8Z" fill="#777"/></svg>
<div class="t" style="left:54.00px;top:961.03px;font-size:11.7px;font-family:'Liberation Mono', monospace;color:#a4a4a4;font-style:italic;letter-spacing:0.0px;">Type a command</div>
</body></html>
